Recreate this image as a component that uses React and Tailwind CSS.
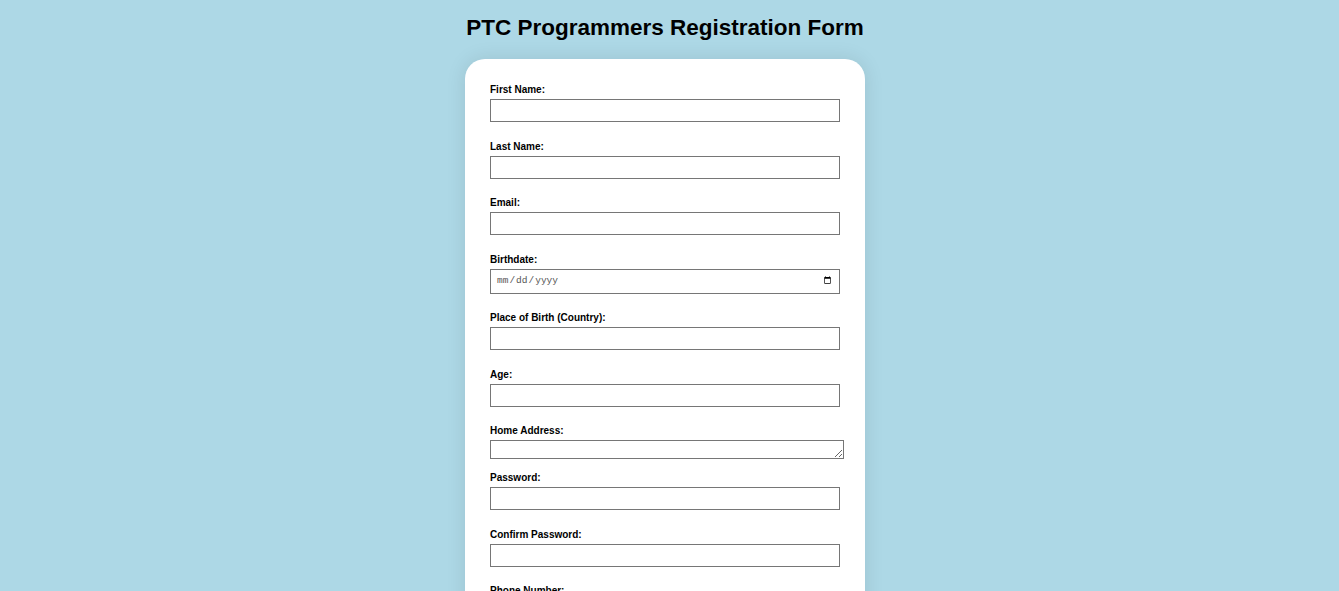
import React from "react";

const fields = [
  { id: "firstName", label: "First Name:", type: "text" },
  { id: "lastName", label: "Last Name:", type: "text" },
  { id: "email", label: "Email:", type: "email" },
  { id: "birthdate", label: "Birthdate:", type: "date" },
  { id: "country", label: "Place of Birth (Country):", type: "text" },
  { id: "age", label: "Age:", type: "number" },
  { id: "address", label: "Home Address:", type: "textarea" },
  { id: "password", label: "Password:", type: "password" },
  { id: "confirmPassword", label: "Confirm Password:", type: "password" },
  { id: "phone", label: "Phone Number:", type: "tel" },
];

export default function App() {
  return (
    <div className="min-h-screen bg-[#ADD8E6] font-['Liberation_Sans',Arial,sans-serif] text-black flex flex-col items-center pr-[9px] pb-10">
      {/* Title */}
      <h1 className="pt-[15px] text-[22.5px] leading-[26px] font-bold">
        PTC Programmers Registration Form
      </h1>

      {/* Form card */}
      <form
        onSubmit={(e) => e.preventDefault()}
        className="mt-[18px] w-[400px] bg-white rounded-[20px] p-[25px] shadow-[0_0_20px_rgba(0,0,0,0.1)]"
      >
        {fields.map((f) => (
          <div key={f.id}>
            <label
              htmlFor={f.id}
              className="block text-[10px] leading-[12px] font-bold mb-[3px]"
            >
              {f.label}
            </label>
            {f.type === "textarea" ? (
              <textarea
                id={f.id}
                className="block w-[354px] h-[19px] border border-[#767676] mb-[13px] resize text-[13px]"
              />
            ) : f.type === "date" ? (
              <input
                id={f.id}
                type="date"
                className="block w-[350px] h-[25px] border border-[#767676] mb-[18.5px] pl-[5px] pr-[5px] font-['Liberation_Mono',monospace] text-[9.5px] text-[#555]"
              />
            ) : (
              <input
                id={f.id}
                type={f.type}
                className="block w-[350px] h-[23px] border border-[#767676] mb-[18.5px] px-[2px] text-[13px]"
              />
            )}
          </div>
        ))}
        <button
          type="submit"
          className="w-full py-2 bg-[#4CAF50] text-white text-[14px] font-bold rounded-[5px]"
        >
          Register
        </button>
      </form>
    </div>
  );
}
